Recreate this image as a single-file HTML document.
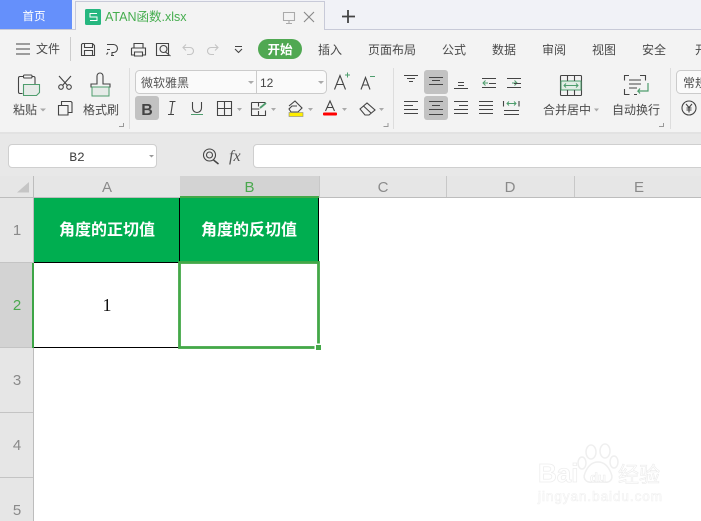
<!DOCTYPE html>
<html><head><meta charset="utf-8"><style>
html,body{margin:0;padding:0;width:701px;height:521px;overflow:hidden;background:#fff}
svg{display:block}
text{font-family:"Liberation Sans","Noto Sans CJK SC",sans-serif}
.t{font-size:12px;fill:#4a4a4a}
.i{fill:none;stroke:#444;stroke-width:1.1}
.h{font-size:15px;fill:#8a8a8a;text-anchor:middle}
.w{font-size:16px;font-weight:bold;fill:#fff;text-anchor:middle}
</style></head><body>
<svg width="701" height="521" viewBox="0 0 701 521" xmlns="http://www.w3.org/2000/svg">
<!-- tab bar -->
<rect width="701" height="30" fill="#f1f2f7"/>
<rect width="72" height="29" fill="#6590fb"/>
<rect x="0" y="29" width="701" height="1" fill="#c8cad8"/>
<path d="M75.500 30V1.500H324.500V30" fill="#f3f3f3" stroke="#c8cad8"/>
<text x="34" y="20" font-size="11.500" fill="#fff" text-anchor="middle">首页</text>
<rect x="85" y="9" width="16" height="16" rx="1.500" fill="#26b77f"/>
<path d="M97 13.500H90V17H97V20.500H90" fill="none" stroke="#fff" stroke-width="1"/>
<text x="105" y="21" font-size="12.500" fill="#45ad4e">ATAN函数.xlsx</text>
<path class="i" style="stroke:#aaa" d="M283.500 12.500h11v8h-11zM289 20.500v3M286 23.500h6"/>
<path class="i" style="stroke:#888" d="M304 12l10 10M314 12l-10 10"/>
<path d="M348 10v13M342 16.500h13" stroke="#444" stroke-width="1.800" fill="none"/>
<!-- ribbon -->
<rect y="30" width="701" height="102" fill="#f3f3f3"/>
<path class="i" d="M16 44h14M16 49h14M16 54h14"/>
<text x="36" y="53" class="t">文件</text>
<rect x="70" y="37" width="1" height="24" fill="#ccc"/>
<path class="i" d="M82.500 43.500h10l2 2V55.500H81.500V44.500zM84.500 43.500v4h8v-4M84.500 55.500v-5h8v5"/>
<path class="i" d="M107 44.500h6.500a4 4 0 0 1 0 8H112v3M111 55.500h3M107 49.500h3M108 52.500l-1.500 2"/>
<path class="i" d="M134 48v-4.500h9V48M131.500 48h14v7h-3M134.500 55h-3v-7M134.500 52h8v4h-8z"/>
<path class="i" d="M156.500 43.500h12v12h-12zM160 49a3.500 3.500 0 1 0 7 0a3.500 3.500 0 1 0-7 0M165.500 52l5 4"/>
<path class="i" style="stroke:#c4c4c4" d="M186 44.500l-3 3 3 3M183 47.500h7a3.500 3.500 0 0 1 0 7h-3"/>
<path class="i" style="stroke:#c4c4c4" d="M215 44.500l3 3-3 3M218 47.500h-7a3.500 3.500 0 0 0 0 7h3"/>
<path class="i" d="M235 46.500h7M235 49l3.500 3.500 3.500-3.500"/>
<rect x="258" y="39" width="44" height="20" rx="10" fill="#50a852"/>
<text x="280" y="54" font-size="12.500" font-weight="bold" fill="#fff" text-anchor="middle">开始</text>
<text x="330" y="54" class="t" text-anchor="middle">插入</text>
<text x="392" y="54" class="t" text-anchor="middle">页面布局</text>
<text x="454" y="54" class="t" text-anchor="middle">公式</text>
<text x="504" y="54" class="t" text-anchor="middle">数据</text>
<text x="554" y="54" class="t" text-anchor="middle">审阅</text>
<text x="604" y="54" class="t" text-anchor="middle">视图</text>
<text x="654" y="54" class="t" text-anchor="middle">安全</text>
<text x="695" y="54" class="t">开</text>
<!-- paste group -->
<path class="i" d="M22.500 93.500H20a1.500 1.500 0 0 1-1.500-1.500V78a1.500 1.500 0 0 1 1.500-1.500h3.500M32 76.500h1.500A1.500 1.500 0 0 1 35 78v6"/>
<rect x="23.500" y="75" width="8.500" height="3" rx="1" class="i"/>
<path d="M23.500 84.500h16v8l-3 3h-13z" fill="#e6ebe8" stroke="#4e9d6d" stroke-width="1.100"/>
<circle cx="61" cy="87" r="2.300" class="i"/><circle cx="69" cy="87" r="2.300" class="i"/>
<path class="i" d="M59 76l8.500 9.500M71 76l-8.500 9.500"/>
<path class="i" d="M58.500 105.500h9.500v9.500h-9.500z M61.500 105v-3.500h9.500l1 1v10h-4"/>
<path class="i" d="M97 84v-8a3 3 0 0 1 6 0v8h7v3H91v-3z"/>
<rect x="92" y="87" width="17" height="9" fill="#e6ebe8" stroke="#4e9d6d" stroke-width="1"/>
<text x="13" y="114" class="t">粘贴</text>
<path d="M40 108.500h6l-3 3z" fill="#aaa"/>
<text x="83" y="114" class="t">格式刷</text>
<path d="M123.500 123v3.500H119" fill="none" stroke="#999"/>
<rect x="129" y="68" width="1" height="61" fill="#ddd"/>
<!-- font group -->
<rect x="135.500" y="70.500" width="191" height="23" rx="4" fill="#fafafa" stroke="#cbcbcb"/>
<rect x="256" y="71" width="1" height="22" fill="#cbcbcb"/>
<text x="141" y="87" font-size="12" fill="#555">微软雅黑</text>
<text x="260" y="87" font-size="12" fill="#444">12</text>
<path d="M248 81h6l-3 3zM318 81h6l-3 3z" fill="#aaa"/>
<path class="i" d="M334.500 89.500l5.500-14 5.500 14M336.500 84.500h7"/>
<path d="M345 75h5M347.500 72.500v5" stroke="#4e9d6d" fill="none"/>
<path class="i" d="M361 89.500l4.500-12 4.500 12M362.500 85h6"/>
<path d="M370 76.500h5" stroke="#4e9d6d" fill="none"/>
<rect x="135" y="96" width="24" height="24" rx="3" fill="#c2c2c2"/>
<text x="147" y="115" font-size="16" font-weight="bold" fill="#444" text-anchor="middle">B</text>
<path class="i" d="M169.500 101.500h6M168 114.500h6M172.800 101.500l-2 13"/>
<path class="i" d="M192.500 102v6a4.500 4.500 0 0 0 9 0v-6"/>
<path d="M191 114.500h12" stroke="#4e9d6d" fill="none"/>
<path class="i" d="M217.500 101.500h14v14h-14zM224.500 101.500v14M217.500 108.500h14"/>
<path d="M237 108h5l-2.500 3zM271 108h5l-2.500 3zM308 108h5l-2.500 3zM342 108h5l-2.500 3zM379 108h5l-2.500 3z" fill="#aaa"/>
<path class="i" d="M251.500 102.500h14M251.500 102.500v13h14v-5M251.500 109h8M258.500 102.500v4M258.500 111v4"/>
<path d="M260 108l6-5" stroke="#4e9d6d" stroke-width="1.800" fill="none"/>
<path class="i" d="M289 106l6-5 7 7-4 4h-7l-2-3 3-3h5"/>
<rect x="289" y="112.500" width="14" height="4" fill="#ffee00" stroke="#888" stroke-width=".6"/>
<path class="i" d="M325.500 111l4.500-10 4.500 10M327 107.500h6"/>
<rect x="323" y="112.500" width="14" height="3" rx="1" fill="#ff0000"/>
<path class="i" d="M360 109l7-6 8 7-6 5h-4zM363.500 106l8 7.500"/>
<path d="M388 123v3.500H383.500" fill="none" stroke="#999"/>
<rect x="393" y="68" width="1" height="61" fill="#ddd"/>
<!-- alignment -->
<rect x="424" y="70" width="24" height="24" rx="3" fill="#c2c2c2"/>
<rect x="424" y="96" width="24" height="24" rx="3" fill="#c2c2c2"/>
<path class="i" d="M404 75.500h14M407 78.500h8M409 81.500h4"/>
<path class="i" d="M429 77.500h14M432 80.500h8M429 84.500h14"/>
<path class="i" d="M454 88.500h14M458 85.500h6M458 82.500h6"/>
<path class="i" d="M482 78.500h14M489 83.500h7M482 87.500h14"/>
<path d="M488 83h-5M485.500 80.500l-2.500 2.500 2.500 2.500M512 83h5M514.500 80.500l2.500 2.500-2.500 2.500" fill="none" stroke="#4e9d6d"/>
<path class="i" d="M507 78.500h14M514 83.500h7M507 87.500h14"/>
<path class="i" d="M404 101.500h14M404 105.500h9M404 109.500h14M404 113.500h14"/>
<path class="i" d="M429 101.500h14M432 105.500h8M429 109.500h14M429 114.500h14"/>
<path class="i" d="M454 101.500h14M459 105.500h9M454 109.500h14M454 113.500h14"/>
<path class="i" d="M479 101.500h14M479 105.500h14M479 109.500h14M479 113.500h14"/>
<path class="i" d="M504 110.500h15M504 114.500h15M503.500 101v5.500M519 101v5.500"/>
<path d="M507 103.500h9M509 101.500l-2 2 2 2M514 101.500l2 2-2 2" fill="none" stroke="#4e9d6d"/>
<!-- merge -->
<rect x="560.500" y="75.500" width="21" height="20" rx="1" fill="#f3f3f3" stroke="#444" stroke-width="1.100"/>
<rect x="561" y="81" width="20" height="9" fill="#e2ede5" stroke="#4e9d6d"/>
<path d="M564 85.500h14M566 83.500l-2 2 2 2M576 83.500l2 2-2 2" fill="none" stroke="#4e9d6d"/>
<path class="i" d="M567.500 76v5M574.500 76v5M567.500 90v5M574.500 90v5"/>
<text x="543" y="114" class="t">合并居中</text>
<path d="M594 108.500h5l-2.500 3z" fill="#aaa"/>
<path class="i" d="M629 75.500h-4.500v5M640 75.500h5.500v5M624.500 89v5.500h5M634 94.500h3M629 80h12M629 84h12M629 88h8"/>
<path d="M648 83v8h-10l2-2.500M638 91l2 2.500" fill="none" stroke="#4e9d6d" stroke-width="1.200"/>
<text x="612" y="114" class="t">自动换行</text>
<path d="M663.500 123v3.500H659" fill="none" stroke="#999"/>
<rect x="670" y="68" width="1" height="61" fill="#ddd"/>
<rect x="676.500" y="70.500" width="40" height="23" rx="4" fill="#fafafa" stroke="#cbcbcb"/>
<text x="683" y="87" class="t">常规</text>
<circle cx="689" cy="108" r="7" class="i"/>
<path class="i" d="M686 104l3 3.500 3-3.500M689 107.500v5M686.500 108h5M686.500 110h5" stroke-width=".9"/>
<!-- formula row -->
<rect y="132" width="701" height="44" fill="#e8e8e8"/>
<rect y="132" width="701" height="2" fill="#e2e2e2"/>
<rect x="8.500" y="144.500" width="148" height="23" rx="3.500" fill="#fff" stroke="#cfcfcf"/>
<text x="77" y="161" font-size="13" fill="#444" text-anchor="middle" style="font-family:'Liberation Mono',monospace">B2</text>
<path d="M149 155h5l-2.500 2.500z" fill="#999"/>
<circle cx="209.500" cy="155" r="6" class="i"/>
<circle cx="209.500" cy="155" r="3" class="i"/>
<path d="M213.500 160l5 4" stroke="#444" stroke-width="1.500" fill="none"/>
<text x="229" y="161" font-size="16" font-style="italic" fill="#555" style="font-family:'Liberation Serif',serif">fx</text>
<rect x="253.500" y="144.500" width="460" height="23" rx="3.500" fill="#fff" stroke="#cfcfcf"/>
<!-- column headers -->
<rect y="176" width="701" height="21" fill="#e6e6e6"/>
<rect x="180" y="176" width="139" height="21" fill="#d3d3d3"/>
<path d="M17 192.500L29 182v10.500z" fill="#c5c5c5"/>
<rect y="197" width="701" height="1" fill="#bdbdbd"/>
<rect x="180" y="196" width="139" height="2" fill="#44a848"/>
<rect x="446" y="176" width="1" height="21" fill="#c8c8c8"/>
<rect x="574" y="176" width="1" height="21" fill="#c8c8c8"/>
<rect x="319" y="176" width="1" height="21" fill="#c8c8c8"/>
<text x="107" y="192" class="h">A</text>
<text x="249.500" y="192" class="h" style="fill:#4aa84e">B</text>
<text x="383" y="192" class="h">C</text>
<text x="510" y="192" class="h">D</text>
<text x="639" y="192" class="h">E</text>
<!-- row headers -->
<rect y="198" width="33" height="323" fill="#e6e6e6"/>
<rect y="263" width="33" height="85" fill="#d3d3d3"/>
<rect x="33" y="176" width="1" height="345" fill="#bdbdbd"/>
<rect y="262" width="33" height="1" fill="#c4c4c4"/>
<rect y="347" width="33" height="1" fill="#c4c4c4"/>
<rect y="412" width="33" height="1" fill="#c4c4c4"/>
<rect y="477" width="33" height="1" fill="#c4c4c4"/>
<text x="17" y="235" class="h">1</text>
<text x="17" y="310" class="h" style="fill:#4aa84e">2</text>
<text x="17" y="385" class="h">3</text>
<text x="17" y="450" class="h">4</text>
<text x="17" y="515" class="h">5</text>
<!-- cells -->
<rect x="34" y="198" width="285" height="64" fill="#00ae50"/>
<text x="107" y="235" class="w">角度的正切值</text>
<text x="249" y="235" class="w">角度的反切值</text>
<rect x="179" y="198" width="1" height="64" fill="#000"/>
<rect x="318" y="198" width="1" height="64" fill="#000"/>
<rect x="34" y="262" width="146" height="1" fill="#000"/>
<rect x="34" y="347" width="146" height="1" fill="#000"/>
<rect x="32" y="263" width="2" height="85" fill="#3da546"/>
<text x="107" y="311" font-size="18" fill="#111" text-anchor="middle" style="font-family:'Liberation Serif',serif">1</text>
<rect x="179.500" y="262.500" width="139" height="85" fill="none" stroke="#44a848" stroke-width="2.800"/>
<rect x="314.500" y="343.500" width="7" height="7" fill="#fff"/>
<rect x="316" y="345" width="5" height="5" fill="#44a848"/>
<!-- watermark -->
<g fill="none" stroke="#efefef" stroke-width="1.500">
<ellipse cx="591" cy="452" rx="5" ry="7"/><ellipse cx="605" cy="451" rx="5" ry="7"/>
<ellipse cx="582" cy="463" rx="4" ry="6"/><ellipse cx="614" cy="462" rx="4" ry="6"/>
<path d="M598 462c-7 0-11 6-13 11-3 7 3 10 7 9h12c5 1 10-2 7-9-2-5-6-11-13-11z"/>
</g>
<text x="538" y="482" font-size="26" font-weight="bold" fill="#fff" stroke="#eeeeee" stroke-width=".8">Bai</text>
<text x="598" y="482" font-size="13" font-weight="bold" fill="#fff" stroke="#ebebeb" stroke-width=".6" text-anchor="middle">du</text>
<text x="618" y="482" font-size="21" fill="#fff" stroke="#ebebeb" stroke-width=".6">经验</text>
<text x="538" y="501" font-size="13.500" fill="#fff" stroke="#f0f0f0" stroke-width=".6" textLength="124">jingyan.baidu.com</text>
</svg>
</body></html>
